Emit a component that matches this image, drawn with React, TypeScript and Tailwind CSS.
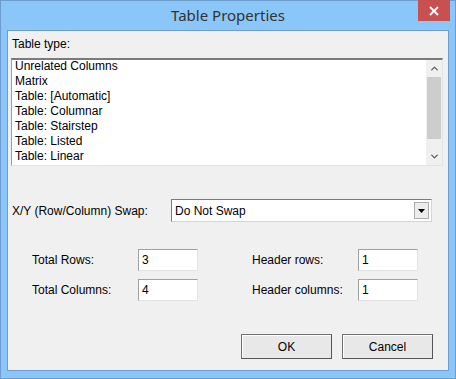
import { ChevronUp, ChevronDown } from 'lucide-react';

const TABLE_TYPES = [
  'Unrelated Columns',
  'Matrix',
  'Table: [Automatic]',
  'Table: Columnar',
  'Table: Stairstep',
  'Table: Listed',
  'Table: Linear',
];

const Field = ({ value }: { value: string }) => (
  <div className="flex h-[22px] w-[60px] items-center border border-t-[#a0a0a0] border-l-[#a0a0a0] border-r-[#e3e3e3] border-b-[#e3e3e3] bg-white pl-[3px]">
    {value}
  </div>
);

const Button = ({ label }: { label: string }) => (
  <button className="flex h-[25px] w-[91px] items-center justify-center border border-[#707070] border-r-[#555] border-b-[#555] bg-[#e8e8e8] shadow-[inset_1px_1px_0_#fff]">
    {label}
  </button>
);

export default function App() {
  return (
    <div
      className="flex h-[379px] w-[456px] flex-col border border-[#6e9ccc] bg-[#8bc6f8] text-[12px] text-black"
      style={{ fontFamily: 'Tahoma, "Liberation Sans", Arial, sans-serif' }}
    >
      {/* Title bar */}
      <div className="relative flex h-[29px] items-center justify-center">
        <span
          className="text-[15px] text-[#333]"
          style={{ fontFamily: '"Noto Sans", "Open Sans", sans-serif' }}
        >
          Table Properties
        </span>
        <div className="absolute top-[-1px] right-[5px] flex h-[21px] w-[32px] items-center justify-center bg-[#c75050] text-white">
          <svg width="10" height="10" viewBox="0 0 10 10">
            <path d="M1 1L9 9M9 1L1 9" stroke="#fff" strokeWidth="1.8" />
          </svg>
        </div>
      </div>

      {/* Client area */}
      <div className="mx-[6px] mb-[7px] flex flex-1 flex-col border border-[#6e9ccc] bg-[#f0f0f0] px-[3px]">
        <div className="pt-[6px] pl-[1px] leading-[15px]">Table type:</div>

        {/* List box */}
        <div className="mt-[6px] flex h-[108px] w-[432px] border border-t-2 border-t-[#7a7a7a] border-l-[#a0a0a0] border-r-[#e3e3e3] border-b-[#e3e3e3] bg-white">
          <div className="-mt-[1px] flex-1 pl-[3px] leading-[15px]">
            {TABLE_TYPES.map((t) => (
              <div key={t}>{t}</div>
            ))}
          </div>
          <div className="flex w-[16px] flex-col bg-[#f0f0f0]">
            <div className="flex h-[17px] items-center justify-center">
              <ChevronUp size={11} strokeWidth={3} className="text-[#606060]" />
            </div>
            <div className="mx-[1px] h-[62px] bg-[#cdcdcd]" />
            <div className="flex flex-1 items-end justify-center pb-[3px]">
              <ChevronDown size={11} strokeWidth={3} className="text-[#606060]" />
            </div>
          </div>
        </div>

        {/* Swap row */}
        <div className="mt-[33px] flex items-center">
          <span className="w-[160px] pl-[1px]">X/Y (Row/Column) Swap:</span>
          <div className="flex h-[23px] w-[261px] items-center border border-t-[#7a7a7a] border-l-[#7a7a7a] border-r-[#d5d5d5] border-b-[#d5d5d5] bg-white pl-[3px]">
            <span className="flex-1">Do Not Swap</span>
            <div className="mr-[2px] flex h-[17px] w-[15px] items-center justify-center border border-[#adadad] bg-[#ececec]">
              <svg width="7" height="4" viewBox="0 0 7 4">
                <path d="M0 0H7L3.5 4Z" fill="#000" />
              </svg>
            </div>
          </div>
        </div>

        {/* Counts */}
        <div className="mt-[27px] grid grid-cols-[106px_114px_106px_60px] items-center gap-y-[8px] pl-[21px]">
          <span>Total Rows:</span>
          <Field value="3" />
          <span>Header rows:</span>
          <Field value="1" />
          <span>Total Columns:</span>
          <Field value="4" />
          <span>Header columns:</span>
          <Field value="1" />
        </div>

        {/* Buttons */}
        <div className="mt-auto mb-[11px] flex justify-end gap-[10px] pr-[12px]">
          <Button label="OK" />
          <Button label="Cancel" />
        </div>
      </div>
    </div>
  );
}
